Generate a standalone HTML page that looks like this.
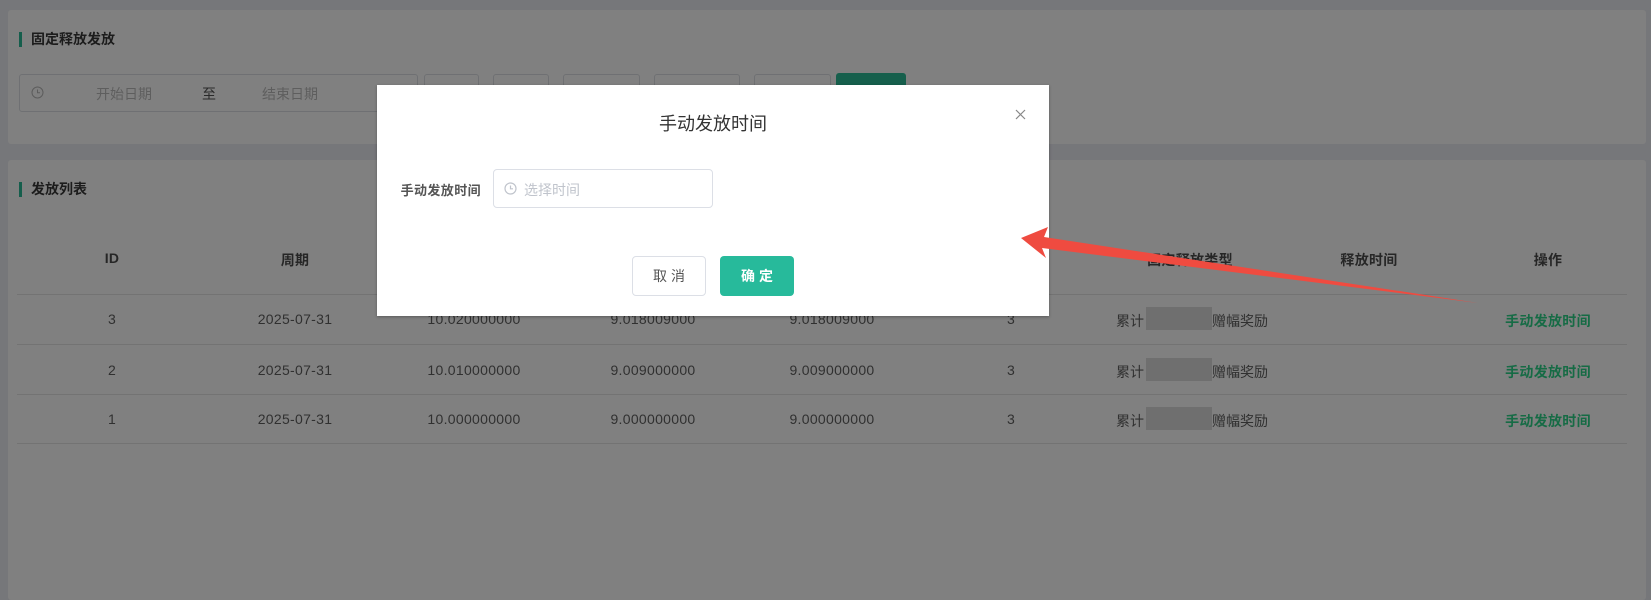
<!DOCTYPE html>
<html><head><meta charset="utf-8"><style>
*{margin:0;padding:0;box-sizing:border-box}
body{width:1651px;height:600px;overflow:hidden;background:#76777a;font-family:"Liberation Sans","Noto Sans CJK SC",sans-serif;position:relative;color:#333}
.a{position:absolute}
.card{position:absolute;background:#808080;border-radius:3px}
.ttl{position:absolute;font-size:14px;font-weight:bold;color:#1c1c1c;padding-left:9px;border-left:3px solid #155e4c;line-height:15px}
.box{position:absolute;border:1px solid #6f7073;border-radius:3px;background:#808080}
.c{position:absolute;text-align:center;font-size:14px;color:#303030;transform:translateX(-50%);white-space:nowrap;letter-spacing:0.3px}
.h{font-weight:bold;color:#262626}
.line{position:absolute;left:17px;width:1610px;height:1px;background:#737373}
.g{color:#166b45;font-weight:bold}
.bl{position:absolute;width:66px;height:23px;background:#6f6f6f}
.t7{position:absolute;font-size:14px;color:#303030;white-space:nowrap}
</style></head><body>
<div class="card" style="left:8px;top:10px;width:1638px;height:134px"></div>
<div class="card" style="left:8px;top:160px;width:1638px;height:440px"></div>
<div class="ttl" style="left:19px;top:32px">固定释放发放</div>
<div class="box" style="left:19px;top:74px;width:399px;height:38px"></div>
<svg class="a" style="left:31px;top:86px" width="13" height="13" viewBox="0 0 13 13"><circle cx="6.5" cy="6.5" r="5.5" fill="none" stroke="#5c5c5c" stroke-width="1"/><path d="M6.5 3.5V6.8H9" fill="none" stroke="#5c5c5c"/></svg>
<div class="a" style="left:96px;top:84px;font-size:14px;color:#5e5e5e">开始日期</div>
<div class="a" style="left:202px;top:84px;font-size:14px;color:#2a2a2a">至</div>
<div class="a" style="left:262px;top:84px;font-size:14px;color:#5e5e5e">结束日期</div>
<div class="box" style="left:424px;top:74px;width:55px;height:38px"></div>
<div class="box" style="left:493px;top:74px;width:56px;height:38px"></div>
<div class="box" style="left:563px;top:74px;width:77px;height:38px"></div>
<div class="box" style="left:654px;top:74px;width:86px;height:38px"></div>
<div class="box" style="left:754px;top:74px;width:77px;height:38px"></div>
<div class="a" style="left:836px;top:73px;width:70px;height:38px;background:#165f4c;border-radius:3px"></div>
<div class="ttl" style="left:19px;top:182px">发放列表</div>
<div class="c h" style="left:112px;top:250px">ID</div>
<div class="c h" style="left:295px;top:250px">周期</div>
<div class="c h" style="left:1011px;top:250px">释放数量</div>
<div class="c h" style="left:1190px;top:250px">固定释放类型</div>
<div class="c h" style="left:1369px;top:250px">释放时间</div>
<div class="c h" style="left:1548px;top:250px">操作</div>
<div class="line" style="top:294px"></div>
<div class="line" style="top:344px"></div>
<div class="line" style="top:394px"></div>
<div class="line" style="top:443px"></div>

<div class="c" style="left:112px;top:311px">3</div><div class="c" style="left:295px;top:311px">2025-07-31</div><div class="c" style="left:474px;top:311px">10.020000000</div><div class="c" style="left:653px;top:311px">9.018009000</div><div class="c" style="left:832px;top:311px">9.018009000</div><div class="c" style="left:1011px;top:311px">3</div>
<div class="t7" style="left:1116px;top:311px">累计</div><div class="bl" style="left:1146px;top:307px"></div><div class="t7" style="left:1212px;top:311px">赠幅奖励</div><div class="c g" style="left:1548px;top:311px">手动发放时间</div>

<div class="c" style="left:112px;top:362px">2</div><div class="c" style="left:295px;top:362px">2025-07-31</div><div class="c" style="left:474px;top:362px">10.010000000</div><div class="c" style="left:653px;top:362px">9.009000000</div><div class="c" style="left:832px;top:362px">9.009000000</div><div class="c" style="left:1011px;top:362px">3</div>
<div class="t7" style="left:1116px;top:362px">累计</div><div class="bl" style="left:1146px;top:358px"></div><div class="t7" style="left:1212px;top:362px">赠幅奖励</div><div class="c g" style="left:1548px;top:362px">手动发放时间</div>

<div class="c" style="left:112px;top:411px">1</div><div class="c" style="left:295px;top:411px">2025-07-31</div><div class="c" style="left:474px;top:411px">10.000000000</div><div class="c" style="left:653px;top:411px">9.000000000</div><div class="c" style="left:832px;top:411px">9.000000000</div><div class="c" style="left:1011px;top:411px">3</div>
<div class="t7" style="left:1116px;top:411px">累计</div><div class="bl" style="left:1146px;top:407px"></div><div class="t7" style="left:1212px;top:411px">赠幅奖励</div><div class="c g" style="left:1548px;top:411px">手动发放时间</div>

<div class="a" style="left:377px;top:85px;width:672px;height:231px;background:#fff;box-shadow:0 1px 3px rgba(0,0,0,.3)"></div>
<div class="a" style="left:377px;top:110px;width:672px;text-align:center;font-size:18px;color:#333">手动发放时间</div>
<svg class="a" style="left:1015px;top:109px" width="11" height="11" viewBox="0 0 11 11"><path d="M1 1L10 10M10 1L1 10" stroke="#888" stroke-width="1.2"/></svg>
<div class="a" style="left:377px;top:180px;width:104px;text-align:right;font-size:13px;font-weight:bold;color:#555;letter-spacing:0.4px">手动发放时间</div>
<div class="a" style="left:493px;top:169px;width:220px;height:39px;border:1px solid #dcdfe6;border-radius:4px"></div>
<svg class="a" style="left:504px;top:182px" width="13" height="13" viewBox="0 0 13 13"><circle cx="6.5" cy="6.5" r="5.5" fill="none" stroke="#c0c4cc" stroke-width="1.2"/><path d="M6.5 3.5V6.8H9" fill="none" stroke="#c0c4cc" stroke-width="1.2"/></svg>
<div class="a" style="left:524px;top:180px;font-size:14px;color:#c0c4cc">选择时间</div>
<div class="a" style="left:632px;top:256px;width:74px;height:40px;border:1px solid #dcdfe6;border-radius:4px;text-align:center;line-height:38px;font-size:14px;color:#555;letter-spacing:4px;padding-left:4px">取消</div>
<div class="a" style="left:720px;top:256px;width:74px;height:40px;background:#27ba9b;border-radius:4px;text-align:center;line-height:40px;font-size:14px;color:#fff;font-weight:bold;letter-spacing:4px;padding-left:4px">确定</div>
<svg class="a" style="left:0;top:0" width="1651" height="600"><polygon points="1021,238 1048,227 1044,237 1478,303 1042,248 1046,258" fill="#ef4b40"/></svg>
</body></html>
